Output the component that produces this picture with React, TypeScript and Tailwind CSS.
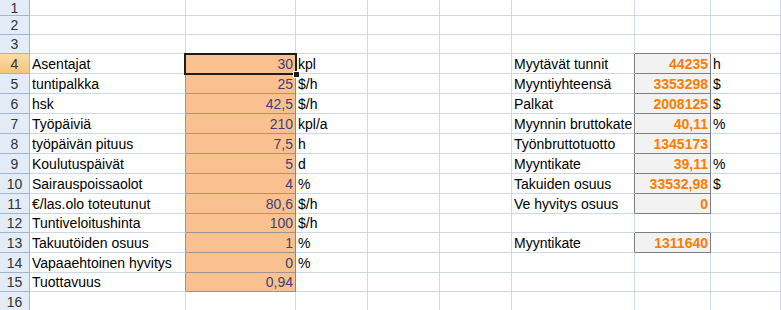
import React from "react";

type Row = { a?: string; b?: string; c?: string; f?: string; g?: string; h?: string };

const rows: Row[] = [
  {},
  {},
  {},
  { a: "Asentajat", b: "30", c: "kpl", f: "Myytävät tunnit", g: "44235", h: "h" },
  { a: "tuntipalkka", b: "25", c: "$/h", f: "Myyntiyhteensä", g: "3353298", h: "$" },
  { a: "hsk", b: "42,5", c: "$/h", f: "Palkat", g: "2008125", h: "$" },
  { a: "Työpäiviä", b: "210", c: "kpl/a", f: "Myynnin bruttokate", g: "40,11", h: "%" },
  { a: "työpäivän pituus", b: "7,5", c: "h", f: "Työnbruttotuotto", g: "1345173" },
  { a: "Koulutuspäivät", b: "5", c: "d", f: "Myyntikate", g: "39,11", h: "%" },
  { a: "Sairauspoissaolot", b: "4", c: "%", f: "Takuiden osuus", g: "33532,98", h: "$" },
  { a: "€/las.olo toteutunut", b: "80,6", c: "$/h", f: "Ve hyvitys osuus", g: "0" },
  { a: "Tuntiveloitushinta", b: "100", c: "$/h" },
  { a: "Takuutöiden osuus", b: "1", c: "%", f: "Myyntikate", g: "1311640" },
  { a: "Vapaaehtoinen hyvitys", b: "0", c: "%" },
  { a: "Tuottavuus", b: "0,94" },
  {},
];

// row numbers are 1-based
const isInput = (r: number) => r >= 4 && r <= 15;
const isCalc = (r: number) => (r >= 4 && r <= 11) || r === 13;

function Cell({ className, children }: { className: string; children?: React.ReactNode }) {
  return (
    <div className={`relative flex items-center whitespace-nowrap border-r border-b ${className}`}>
      {children}
    </div>
  );
}

export default function App() {
  return (
    <div className="w-[781px] h-[310px] overflow-hidden bg-white font-['Liberation_Sans',Arial,sans-serif] text-[14px] leading-none text-black">
      <div className="grid grid-cols-[30px_156px_110px_72px_72px_72px_123px_76px_1fr] grid-rows-[16px_19px_19px_20px_20px_20px_20px_20px_20px_20px_20px_19px_20px_20px_19px_20px]">
        {rows.map((row, i) => {
          const r = i + 1;
          const input = isInput(r);
          const calc = isCalc(r);
          return (
            <React.Fragment key={r}>
              {/* row header */}
              <Cell
                className={
                  r === 4
                    ? "justify-center border-r-[#9eb6ce] border-b-[#e3a94f] bg-gradient-to-b from-[#fbdca6] to-[#f5c47a] text-[#333]"
                    : "justify-center border-r-[#9eb6ce] border-b-[#9eb6ce] bg-[#e4ecf7] text-[#333]"
                }
              >
                {r}
              </Cell>

              {/* A */}
              <Cell className={`pl-[2px] border-b-[#d0d7e5] ${input ? "border-r-[#a0958c]" : "border-r-[#d0d7e5]"}`}>
                {row.a}
              </Cell>

              {/* B */}
              <Cell
                className={
                  input
                    ? `justify-end pr-[2px] bg-[#f9c18f] text-[#3f3f76] border-r-[#8c8580] border-b-[#a0958c] ${r === 4 ? "z-10" : ""}`
                    : r === 3
                    ? "border-r-[#d0d7e5] border-b-[#a0958c]"
                    : "border-r-[#d0d7e5] border-b-[#d0d7e5]"
                }
              >
                {row.b}
                {r === 4 && (
                  <div className="absolute left-[-2px] top-[-1px] right-[-2px] bottom-[-2px] border-2 border-[#1d1d1d]">
                    <div className="absolute right-[-5px] bottom-[-5px] w-[7px] h-[7px] bg-[#1d1d1d] border border-white" />
                  </div>
                )}
              </Cell>

              {/* C, D, E */}
              <Cell className="pl-[2px] border-r-[#d0d7e5] border-b-[#d0d7e5]">{row.c}</Cell>
              <Cell className="border-r-[#d0d7e5] border-b-[#d0d7e5]" />
              <Cell className="border-r-[#d0d7e5] border-b-[#d0d7e5]" />

              {/* F: long labels are clipped at the next cell */}
              <Cell className={`overflow-hidden pl-[2px] border-b-[#d0d7e5] ${calc ? "border-r-[#7f7f7f]" : "border-r-[#d0d7e5]"}`}>
                {row.f}
              </Cell>

              {/* G */}
              <Cell
                className={
                  calc
                    ? "justify-end pr-[2px] bg-[#f2f2f2] font-bold text-[#fa7d00] border-r-[#7f7f7f] border-b-[#7f7f7f]"
                    : r === 3 || r === 12
                    ? "border-r-[#d0d7e5] border-b-[#7f7f7f]"
                    : "border-r-[#d0d7e5] border-b-[#d0d7e5]"
                }
              >
                {row.g}
              </Cell>

              {/* H */}
              <Cell className="pl-[2px] border-r-[#d0d7e5] border-b-[#d0d7e5]">{row.h}</Cell>
            </React.Fragment>
          );
        })}
      </div>
    </div>
  );
}
